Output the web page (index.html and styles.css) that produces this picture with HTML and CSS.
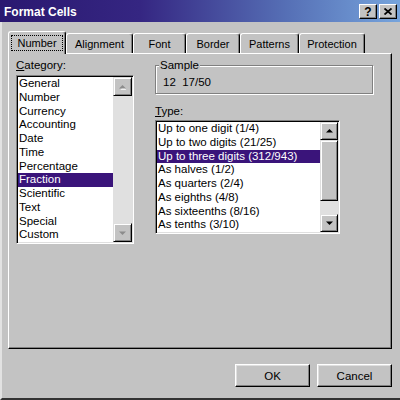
FILE: index.html
```html
<!DOCTYPE html>
<html>
<head>
<meta charset="utf-8">
<link rel="stylesheet" href="styles.css">
</head>
<body>
<div class="window">
  <div class="titlebar">
    <span class="title">Format Cells</span>
    <div class="tbtns">
      <span class="tbtn">?</span>
      <span class="tbtn">
        <svg width="8" height="7" viewBox="0 0 8 7"><path d="M0.5 0.5 L7.5 6.5 M7.5 0.5 L0.5 6.5" stroke="#000" stroke-width="1.8"/></svg>
      </span>
    </div>
  </div>
  <div class="body">
    <div class="tabs">
      <div class="tab active w-number"><span class="focus">Number</span></div>
      <div class="tab w-align">Alignment</div>
      <div class="tab w-font">Font</div>
      <div class="tab w-border">Border</div>
      <div class="tab w-patterns">Patterns</div>
      <div class="tab w-protection">Protection</div>
    </div>
    <div class="panel">
      <div class="col-left">
        <div class="label"><u>C</u>ategory:</div>
        <div class="listbox cat">
          <ul class="items">
            <li>General</li>
            <li>Number</li>
            <li>Currency</li>
            <li>Accounting</li>
            <li>Date</li>
            <li>Time</li>
            <li>Percentage</li>
            <li class="sel">Fraction</li>
            <li>Scientific</li>
            <li>Text</li>
            <li>Special</li>
            <li>Custom</li>
          </ul>
          <div class="vscroll cat-scroll disabled">
            <div class="sbtn"><svg width="9" height="6" viewBox="0 0 9 6"><polygon points="1.5,5 4.5,2 7.5,5" fill="#fff" transform="translate(0.8,0.8)"/><polygon points="1,4.5 4.5,1 8,4.5" fill="#8c8c8c"/></svg></div>
            <div class="track"></div>
            <div class="sbtn"><svg width="9" height="6" viewBox="0 0 9 6"><polygon points="1,1.5 4.5,5 8,1.5" fill="#8c8c8c"/></svg></div>
          </div>
        </div>
      </div>
      <div class="col-right">
        <fieldset class="group">
          <legend>Sample</legend>
          <div class="sample">12&nbsp; 17/50</div>
        </fieldset>
        <div class="label type-label"><u>T</u>ype:</div>
        <div class="listbox type">
          <ul class="items">
            <li>Up to one digit (1/4)</li>
            <li>Up to two digits (21/25)</li>
            <li class="sel">Up to three digits (312/943)</li>
            <li>As halves (1/2)</li>
            <li>As quarters (2/4)</li>
            <li>As eighths (4/8)</li>
            <li>As sixteenths (8/16)</li>
            <li>As tenths (3/10)</li>
          </ul>
          <div class="vscroll type-scroll">
            <div class="sbtn"><svg width="9" height="6" viewBox="0 0 9 6"><polygon points="1,4.5 4.5,1 8,4.5" fill="#000"/></svg></div>
            <div class="thumb"></div>
            <div class="track"></div>
            <div class="sbtn"><svg width="9" height="6" viewBox="0 0 9 6"><polygon points="1,1.5 4.5,5 8,1.5" fill="#000"/></svg></div>
          </div>
        </div>
      </div>
    </div>
    <div class="buttons">
      <div class="btn">OK</div>
      <div class="btn">Cancel</div>
    </div>
  </div>
</div>
</body>
</html>
```
FILE: styles.css
```css
* { box-sizing: border-box; }
html, body { margin: 0; padding: 0; }
body {
  width: 400px;
  height: 400px;
  overflow: hidden;
  background: #c3c3c3;
  color: #000;
  font-family: "Liberation Sans", Arial, sans-serif;
  font-size: 11.5px;
}
.window {
  width: 400px;
  height: 400px;
  display: flex;
  flex-direction: column;
}
.titlebar {
  height: 22px;
  flex: none;
  display: flex;
  align-items: center;
  justify-content: space-between;
  padding: 1px 3px 0 4px;
  background: linear-gradient(to right, #2a1870 0%, #352682 35%, #5670b6 72%, #76a4dc 100%);
}
.title {
  color: #fff;
  font-weight: bold;
  font-size: 12px;
}
.tbtns { display: flex; gap: 2px; }
.tbtn {
  width: 18px;
  height: 15px;
  background: #c3c3c3;
  border: 1px solid;
  border-color: #fff #000 #000 #fff;
  box-shadow: inset -1px -1px #808080;
  display: flex;
  align-items: center;
  justify-content: center;
  font-weight: bold;
  font-size: 12px;
  line-height: 1;
}
.body {
  flex: 1;
  display: flex;
  flex-direction: column;
  padding: 9px 8px 0 6px;
  border-left: 2px solid #e2e2e2;
  border-bottom: 2px solid #333;
}
.tabs {
  height: 22px;
  display: flex;
  align-items: flex-end;
}
.tab {
  height: 20px;
  border: 1px solid;
  border-color: #fff #000 transparent #fff;
  border-bottom: none;
  border-radius: 3px 3px 0 0;
  box-shadow: inset -1px 0 #808080;
  text-align: center;
  padding-top: 3px;
  line-height: 14px;
  font-size: 11px;
  background: #c3c3c3;
}
.tab.active {
  height: 23px;
  margin-bottom: -1px;
  padding-top: 3px;
  position: relative;
  z-index: 1;
}
.focus {
  display: inline-block;
  border: 1px dotted #000;
  padding: 0 5px;
  line-height: 14px;
}
.w-number { width: 58px; }
.w-align { width: 67px; }
.w-font { width: 53px; }
.w-border { width: 54px; }
.w-patterns { width: 59px; }
.w-protection { width: 66px; }

.panel {
  height: 296px;
  flex: none;
  border: 1px solid;
  border-color: #fff #000 #000 #fff;
  box-shadow: inset -1px -1px #808080;
  padding: 4px 0 0 7px;
  display: grid;
  grid-template-columns: 118px 218px;
  column-gap: 21px;
  align-items: start;
}
.label {
  line-height: 14px;
  height: 14px;
}
.listbox {
  display: flex;
  background: #fff;
  border: 1px solid;
  border-color: #808080 #fff #fff #808080;
  box-shadow: inset 1px 1px #000, inset -1px -1px #dfdfdf;
  padding: 1px;
}
.listbox.cat {
  margin-top: 3px;
  width: 118px;
  height: 169px;
}
.listbox.type {
  margin-top: 2px;
  width: 185px;
  height: 114px;
}
.items {
  list-style: none;
  margin: 0;
  padding: 0;
  flex: 1;
  min-width: 0;
  overflow: hidden;
}
.items li {
  height: 13.75px;
  line-height: 13.75px;
  padding-left: 1px;
  white-space: nowrap;
}
.items li.sel {
  background: #3a147a;
  color: #fff;
}
.vscroll {
  display: flex;
  flex-direction: column;
  background: #e0e0e0;
}
.cat-scroll { width: 19px; }
.type-scroll { width: 18px; }
.sbtn {
  flex: none;
  height: 19px;
  background: #c3c3c3;
  border: 1px solid;
  border-color: #dfdfdf #000 #000 #dfdfdf;
  box-shadow: inset 1px 1px #fff, inset -1px -1px #808080;
  display: flex;
  align-items: center;
  justify-content: center;
}
.type-scroll .sbtn { height: 18px; }
.track { flex: 1; background: #e0e0e0; }
.thumb {
  flex: none;
  height: 61px;
  background: #c3c3c3;
  border: 1px solid;
  border-color: #dfdfdf #000 #000 #dfdfdf;
  box-shadow: inset 1px 1px #fff, inset -1px -1px #808080;
}
.group {
  margin: 0;
  width: 218px;
  padding: 3px 6px 4px 3px;
  border: 1px solid #808080;
  box-shadow: inset 1px 1px #fff, 1px 1px 0 #fff;
}
.group legend {
  padding: 0 1px;
  line-height: 14px;
  background: #c3c3c3;
}
.sample {
  padding-left: 4px;
  line-height: 14px;
}
.type-label { margin-top: 10px; }
.buttons {
  margin-top: 15px;
  display: flex;
  justify-content: flex-end;
  gap: 7px;
}
.btn {
  width: 75px;
  height: 23px;
  background: #c3c3c3;
  border: 1px solid;
  border-color: #fff #000 #000 #fff;
  box-shadow: inset -1px -1px #808080, inset 1px 1px #dfdfdf;
  display: flex;
  align-items: center;
  justify-content: center;
}
```
